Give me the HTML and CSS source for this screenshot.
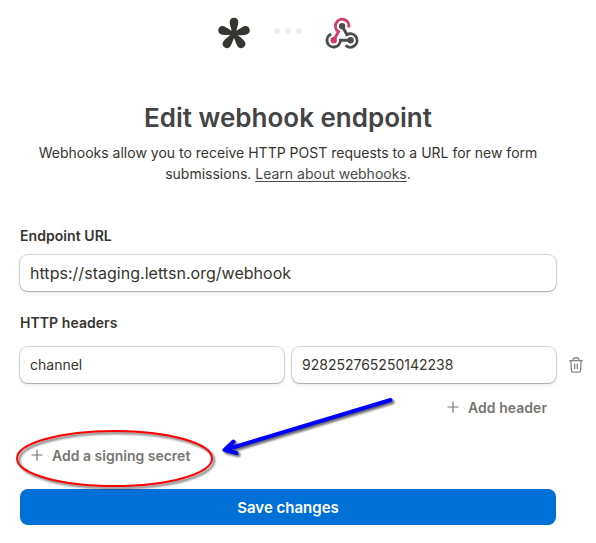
FILE: index.html
```html
<!DOCTYPE html>
<html lang="en">
<head>
<meta charset="utf-8">
<title>Edit webhook endpoint</title>
<link rel="stylesheet" href="styles.css">
</head>
<body>
<main class="page">
  <header class="logos">
    <svg class="asterisk" viewBox="0 0 34 34">
      <defs><path id="petal" d="M15.300 17.500C14.700 12 12.700 8.500 12.700 5C12.700 2.200 14.500.7 17 .7S21.300 2.200 21.300 5C21.300 8.500 19.300 12 18.700 17.500Z"/></defs>
      <use href="#petal"/>
      <use href="#petal" transform="rotate(72 17 17)"/>
      <use href="#petal" transform="rotate(144 17 17)"/>
      <use href="#petal" transform="rotate(216 17 17)"/>
      <use href="#petal" transform="rotate(288 17 17)"/>
    </svg>
    <div class="dots"><i></i><i></i><i></i></div>
    <svg class="hook" viewBox="0 0 34 32">
      <path class="pink" d="M23.700 10.500A6.700 6.700 0 1 0 13.500 14.600L8.700 23"/>
      <path class="dark" d="M6.200 17.100A6.700 6.700 0 1 0 15.400 23.300H25.600"/>
      <path class="dark" d="M17.200 9.200L22 17.700A6.700 6.700 0 1 1 20.600 28.200"/>
      <circle class="dark-dot" cx="17.100" cy="9.100" r="3.200"/>
      <circle class="pink-dot" cx="8.700" cy="23.300" r="3.200"/>
      <circle class="dark-dot" cx="25.600" cy="23.300" r="3.200"/>
    </svg>
  </header>
  <h1>Edit webhook endpoint</h1>
  <p class="intro">Webhooks allow you to receive HTTP POST requests to a URL for new form<br>submissions. <a href="#">Learn about webhooks</a>.</p>
  <form>
    <label class="label" for="url">Endpoint URL</label>
    <input class="field url" id="url" value="https://staging.lettsn.org/webhook">
    <div class="label">HTTP headers</div>
    <div class="row">
      <input class="field" value="channel" aria-label="Header name">
      <input class="field" value="928252765250142238" aria-label="Header value">
      <svg class="trash" viewBox="0 0 16 16"><path d="M1.200 3.700H14.800M5.200 3.500V2.200Q5.200 1 6.400 1H9.600Q10.800 1 10.800 2.200V3.500M2.900 4L3.400 13.500Q3.500 15.200 5 15.200H11Q12.500 15.200 12.600 13.500L13.100 4M6.700 6.700V12M9.300 6.700V12"/></svg>
    </div>
    <button type="button" class="add add-header"><svg viewBox="0 0 12 12"><path d="M6 .5V11.500M.5 6H11.500"/></svg>Add header</button>
    <button type="button" class="add add-secret"><svg viewBox="0 0 12 12"><path d="M6 .5V11.500M.5 6H11.500"/></svg>Add a signing secret</button>
    <button type="button" class="save">Save changes</button>
  </form>
</main>
<svg class="marks" viewBox="0 0 596 543">
  <ellipse cx="114.500" cy="458.500" rx="97.500" ry="27.500"/>
  <path d="M390.500 400L224.500 450M233.500 441.500L224.500 450L236.500 453"/>
</svg>
</body>
</html>
```
FILE: styles.css
```css
* { box-sizing: border-box; }
body {
  margin: 0;
  background: #fff;
  color: #37352f;
  font-family: Inter, "Liberation Sans", sans-serif;
  font-size: 14px;
}
.page { width: 596px; height: 543px; padding: 17px 40px 0 20px; overflow: hidden; }
.logos { display: flex; align-items: center; justify-content: center; height: 32px; }
.asterisk { width: 34px; height: 34px; margin-top: 2px; fill: #37352f; }
.dots { display: flex; gap: 5px; margin: -4px 23px 0 23px; }
.dots i { width: 6px; height: 6px; border-radius: 50%; background: #eee; }
.hook { width: 34px; height: 32px; margin-right: 1px; fill: none; stroke-width: 2.9; }
.pink { stroke: #d23a69; }
.dark { stroke: #4b4b4b; }
.pink-dot { fill: #d23a69; }
.dark-dot { fill: #4b4b4b; }
h1 {
  margin: 52px 0 0;
  color: #444;
  font-size: 26px;
  font-weight: 600;
  line-height: 34px;
  text-align: center;
}
.intro { margin: 7px 0 0; line-height: 21px; text-align: center; }
.intro a {
  color: #4a4a4a;
  text-decoration: underline 1px;
  text-underline-offset: 2px;
  text-decoration-skip-ink: none;
}
form { display: flex; flex-direction: column; margin-top: 42px; }
.label { height: 20px; font-weight: 600; line-height: 20px; letter-spacing: .06px; }
.field {
  width: 264px;
  height: 36px;
  padding: 0 10px;
  border: 0;
  border-radius: 8px;
  background: #fff;
  box-shadow: 0 0 0 1px rgba(61, 59, 53, .2), 0 1px 1px rgba(61, 59, 53, .2), 0 2px 5px rgba(61, 59, 53, .1);
  color: inherit;
  font: 14px Inter, sans-serif;
}
.url { width: 536px; margin: 9px 0 22px; font-size: 16px; letter-spacing: .03px; }
.row { display: flex; align-items: center; gap: 8px; width: 566px; margin-top: 14px; }
.row .field { flex: none; padding-bottom: 2px; }
.trash { flex: none; width: 16px; height: 16px; margin-left: 4px; fill: none; stroke: #888782; stroke-width: 1.3; }
.add {
  display: flex;
  align-items: center;
  gap: 9px;
  height: 20px;
  padding: 0;
  border: 0;
  background: none;
  color: #777672;
  font: 600 14px Inter, sans-serif;
}
.add svg { width: 12px; height: 12px; fill: none; stroke: #777672; stroke-width: 1.2; }
.add-header { align-self: flex-end; margin: 14px 9px 0 0; letter-spacing: .04px; }
.add-secret { align-self: flex-start; margin: 28px 0 0 11px; }
.save {
  width: 536px;
  height: 36px;
  margin-top: 24px;
  border: 0;
  border-radius: 8px;
  background: #0070d7;
  color: #fff;
  font: 600 15px Inter, sans-serif;
}
.marks {
  position: absolute;
  inset: 0;
  width: 596px;
  height: 543px;
  pointer-events: none;
  fill: none;
  stroke-linecap: round;
  stroke-linejoin: round;
  filter: drop-shadow(2px 2px 1px rgba(0, 0, 0, .6));
}
.marks ellipse { stroke: #f00; stroke-width: 2; }
.marks path { stroke: #00f; stroke-width: 4; }
```
